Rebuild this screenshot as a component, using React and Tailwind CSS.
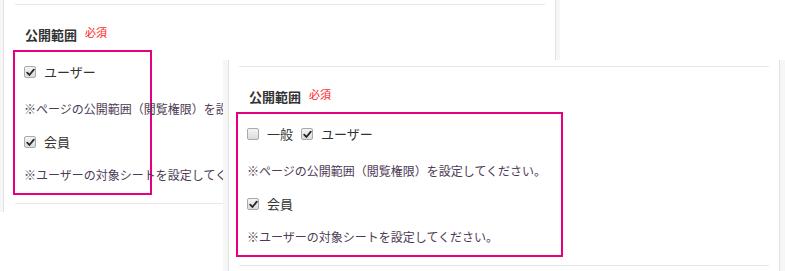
import React from "react";

const FONT = { fontFamily: '"Noto Sans CJK JP", "Noto Sans", sans-serif' };

function Box({ checked }) {
  return (
    <span className="inline-flex w-[12px] h-[12px] shrink-0 items-center justify-center rounded-[2px] border border-[#a9a9a9] bg-gradient-to-b from-[#f4f4f4] to-[#dcdcdc]">
      {checked && (
        <svg width="9" height="9" viewBox="0 0 9 9">
          <path d="M1.2 4.6 L3.4 7 L7.8 1.6" fill="none" stroke="#262626" strokeWidth="1.8" strokeLinecap="round" strokeLinejoin="round" />
        </svg>
      )}
    </span>
  );
}

function Item({ checked, label }) {
  return (
    <span className="inline-flex items-center">
      <Box checked={checked} />
      <span className="ml-[8px] text-[13px] text-[#333]">{label}</span>
    </span>
  );
}

function Section({ width, showGeneral, boxShift }) {
  return (
    <>
      <div className="mt-[20px] flex h-[20px] items-center">
        <span className="text-[13px] font-bold text-[#333]">公開範囲</span>
        <span className="ml-[8px] -mt-[6px] text-[11px] text-[#ff1a1a]">必須</span>
      </div>
      <div
        className="mt-[5px] border-2 border-[#e4007f] pl-[9px] pb-[1px]"
        style={{ width, marginLeft: boxShift }}
      >
        <div className="flex h-[40px] items-center gap-[8px] whitespace-nowrap">
          {showGeneral && <Item checked={false} label="一般" />}
          <Item checked label="ユーザー" />
        </div>
        <div className="flex h-[34px] items-center whitespace-nowrap text-[12px] text-[#4d3b55]">
          ※ページの公開範囲（閲覧権限）を設定してください。
        </div>
        <div className="flex h-[32px] items-center whitespace-nowrap">
          <Item checked label="会員" />
        </div>
        <div className="flex h-[34px] items-center whitespace-nowrap text-[12px] text-[#4d3b55]">
          ※ユーザーの対象シートを設定してください。
        </div>
      </div>
    </>
  );
}

export default function App() {
  return (
    <div className="relative h-[271px] w-[785px] overflow-hidden bg-white" style={FONT}>
      {/* back window */}
      <div className="flex h-[212px] w-[560px]">
        <div className="w-[3px] bg-[#f6f6f6]" />
        <div className="w-[1px] bg-[#e2e2e2]" />
        <div className="flex-1 overflow-visible pt-[4px]">
          <div className="ml-[11px] mr-[10px] h-[1px] bg-[#e8e8e8]" />
          <div className="pl-[21px]">
            <Section width={139} boxShift={-12} />
          </div>
          <div className="ml-[11px] mr-[10px] mt-[8px] h-[1px] bg-[#e8e8e8]" />
        </div>
        <div className="w-[1px] bg-[#e2e2e2]" />
        <div className="w-[4px] bg-[#f6f6f6]" />
      </div>

      {/* front window */}
      <div className="absolute left-[223px] top-[60px] flex h-[211px] w-[562px] bg-white">
        <div className="w-[5px] bg-[#f6f6f6]" />
        <div className="w-[1px] bg-[#e2e2e2]" />
        <div className="flex-1 pt-[6px]">
          <div className="mx-[10px] h-[1px] bg-[#e8e8e8]" />
          <div className="pl-[20px]">
            <Section width={327} showGeneral boxShift={-13} />
          </div>
          <div className="mx-[10px] mt-[8px] h-[1px] bg-[#e8e8e8]" />
        </div>
        <div className="w-[1px] bg-[#e2e2e2]" />
        <div className="w-[5px] bg-[#f6f6f6]" />
      </div>
    </div>
  );
}
